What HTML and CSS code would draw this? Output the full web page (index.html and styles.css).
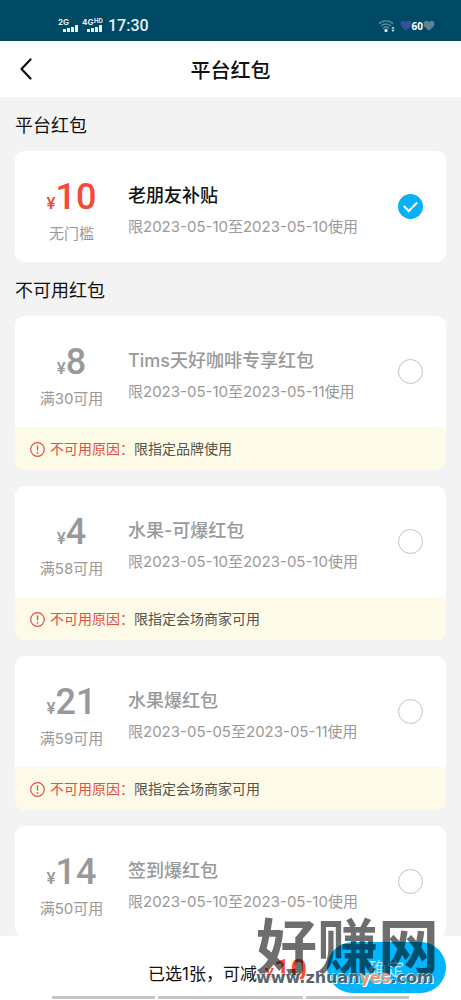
FILE: index.html
```html
<!DOCTYPE html>
<html lang="zh-CN">
<head>
<meta charset="utf-8">
<meta name="viewport" content="width=device-width, initial-scale=1">
<title>平台红包</title>
<link rel="stylesheet" href="styles.css">
</head>
<body>
<div class="screen">
  <div class="status">
    <div class="status-left">
      <svg class="signal" width="48" height="17" viewBox="0 0 48 17" aria-hidden="true">
        <g fill="#e6f1f5">
          <text class="net" x="0" y="8">2G</text>
          <text class="net" x="24" y="8">4G</text>
          <text class="hd" x="36" y="6">HD</text>
          <rect x="5" y="12" width="3" height="3"/><rect x="9" y="11" width="3" height="4"/><rect x="13" y="10" width="3" height="5"/><rect x="17" y="8" width="3" height="7"/>
          <rect x="29" y="12" width="3" height="3"/><rect x="33" y="11" width="3" height="4"/><rect x="37" y="10" width="3" height="5"/><rect x="41" y="8" width="3" height="7"/>
        </g>
      </svg>
      <time class="clock">17:30</time>
    </div>
    <div class="status-right">
      <svg width="17" height="14" viewBox="0 0 17 14" aria-hidden="true">
        <g fill="none" stroke="#52879a" stroke-width="1.6">
          <path d="M1 4.5Q8 -1 15 4.5"/><path d="M3 7Q8 3 13 7"/><path d="M5 9.3Q8 7 11 9.3"/>
        </g>
        <circle cx="8" cy="11.5" r="1.6" fill="#fff"/>
        <path d="M15 7.5l1.700 2.200h-3.400zM15 13l1.700-2.200h-3.400z" fill="#c3dde6"/>
      </svg>
      <div class="battery">
        <svg width="12" height="11" viewBox="0 0 13 12" aria-hidden="true"><path d="M6.500 11.500C4 9.500.5 7 .5 4 .5 .5 5-.5 6.500 2.500 8-.5 12.500.5 12.500 4c0 3-3.500 5.500-6 7.500z" fill="#384fa0"/></svg>
        <span>60</span>
        <svg width="12" height="11" viewBox="0 0 13 12" aria-hidden="true"><path d="M6.500 11.500C4 9.500.5 7 .5 4 .5 .5 5-.5 6.500 2.500 8-.5 12.500.5 12.500 4c0 3-3.500 5.500-6 7.500z" fill="#5d8493"/></svg>
      </div>
    </div>
  </div>

  <header class="header">
    <button class="back" type="button" aria-label="返回">
      <svg width="12" height="22" viewBox="0 0 12 22" aria-hidden="true"><path d="M10.500 1.500L1.500 11l9 9.500" fill="none" stroke="#111" stroke-width="2.200" stroke-linecap="round" stroke-linejoin="round"/></svg>
    </button>
    <h1>平台红包</h1>
  </header>

  <main class="content">
    <h2>平台红包</h2>
    <article class="card active">
      <div class="coupon">
        <div class="value"><p class="price"><small>¥</small>10</p><p class="rule">无门槛</p></div>
        <div class="info"><label class="name" for="c0">老朋友补贴</label><p class="date">限2023-05-10至2023-05-10使用</p></div>
        <input class="pick" type="radio" name="coupon" id="c0" checked>
      </div>
    </article>

    <h2>不可用红包</h2>
    <div class="list">
      <article class="card">
        <div class="coupon">
          <div class="value"><p class="price"><small>¥</small>8</p><p class="rule">满30可用</p></div>
          <div class="info"><label class="name" for="c1">Tims天好咖啡专享红包</label><p class="date">限2023-05-10至2023-05-11使用</p></div>
          <input class="pick" type="radio" name="coupon" id="c1" disabled>
        </div>
        <p class="notice">
          <svg width="15" height="15" viewBox="0 0 15 15" aria-hidden="true"><circle cx="7.500" cy="7.500" r="6.800" fill="none" stroke="#df5140" stroke-width="1.200"/><path d="M6.700 3.500h1.600l-.3 5.200h-1z" fill="#df5140"/><circle cx="7.500" cy="10.800" r=".9" fill="#df5140"/></svg>
          <span><b>不可用原因：</b>限指定品牌使用</span>
        </p>
      </article>

      <article class="card">
        <div class="coupon">
          <div class="value"><p class="price"><small>¥</small>4</p><p class="rule">满58可用</p></div>
          <div class="info"><label class="name" for="c2">水果-可爆红包</label><p class="date">限2023-05-10至2023-05-10使用</p></div>
          <input class="pick" type="radio" name="coupon" id="c2" disabled>
        </div>
        <p class="notice">
          <svg width="15" height="15" viewBox="0 0 15 15" aria-hidden="true"><circle cx="7.500" cy="7.500" r="6.800" fill="none" stroke="#df5140" stroke-width="1.200"/><path d="M6.700 3.500h1.600l-.3 5.200h-1z" fill="#df5140"/><circle cx="7.500" cy="10.800" r=".9" fill="#df5140"/></svg>
          <span><b>不可用原因：</b>限指定会场商家可用</span>
        </p>
      </article>

      <article class="card">
        <div class="coupon">
          <div class="value"><p class="price"><small>¥</small>21</p><p class="rule">满59可用</p></div>
          <div class="info"><label class="name" for="c3">水果爆红包</label><p class="date">限2023-05-05至2023-05-11使用</p></div>
          <input class="pick" type="radio" name="coupon" id="c3" disabled>
        </div>
        <p class="notice">
          <svg width="15" height="15" viewBox="0 0 15 15" aria-hidden="true"><circle cx="7.500" cy="7.500" r="6.800" fill="none" stroke="#df5140" stroke-width="1.200"/><path d="M6.700 3.500h1.600l-.3 5.200h-1z" fill="#df5140"/><circle cx="7.500" cy="10.800" r=".9" fill="#df5140"/></svg>
          <span><b>不可用原因：</b>限指定会场商家可用</span>
        </p>
      </article>

      <article class="card">
        <div class="coupon">
          <div class="value"><p class="price"><small>¥</small>14</p><p class="rule">满50可用</p></div>
          <div class="info"><label class="name" for="c4">签到爆红包</label><p class="date">限2023-05-10至2023-05-10使用</p></div>
          <input class="pick" type="radio" name="coupon" id="c4" disabled>
        </div>
      </article>
    </div>
  </main>

  <footer class="footer">
    <div class="checkout">
      <p class="summary">已选1张，可减<span class="saving"><small>¥</small>10</span></p>
      <button class="confirm" type="button">确定</button>
    </div>
    <div class="gestures"><i></i><i></i><i></i></div>
    <div class="watermark" aria-hidden="true">
      <div class="mark-name">好赚网</div>
      <div class="mark-url">www.zhuan<em>yes</em>.com</div>
    </div>
  </footer>
</div>
</body>
</html>
```

FILE: styles.css
```css
* { box-sizing: border-box; }
body, h1, h2, p { margin: 0; }
body {
  font-family: Inter, "Noto Sans CJK SC", sans-serif;
  color: #111;
  background: #f3f3f3;
}
button { padding: 0; border: 0; font: inherit; }
.screen { display: flex; flex-direction: column; height: 100vh; overflow: hidden; }

.status {
  flex: none;
  display: flex;
  justify-content: space-between;
  height: 41px;
  padding: 10px 26px 0 58px;
  color: #e6f1f5;
  background: #004964;
}
.status-left, .status-right, .battery { display: flex; align-items: center; }
.status-left { gap: 2px; }
.status-right { gap: 5px; }
.net { font: bold 8px Inter, sans-serif; }
.hd { font: bold 6px Inter, sans-serif; }
.clock { font: 500 16px/24px Roboto, sans-serif; }
.battery { font: bold 10px/12px "Noto Sans", sans-serif; color: #fff; }

.header {
  flex: none;
  display: grid;
  grid-template-columns: 48px 1fr 48px;
  align-items: center;
  height: 56px;
  background: #fff;
}
.back { display: flex; align-items: center; height: 56px; padding-left: 20px; background: none; }
h1 { padding-top: 3px; font-size: 20px; font-weight: 500; line-height: 28px; text-align: center; }

.content { flex: 1; min-height: 0; padding: 0 15px; overflow-y: auto; scrollbar-width: none; }
h2 { padding: 15px 0 12px; font-size: 18px; font-weight: 400; line-height: 27px; }
.list { display: grid; gap: 16px; }
.card { overflow: hidden; color: #999; background: #fff; border-radius: 9px; }
.coupon { display: flex; align-items: center; min-height: 111px; padding-right: 23px; }
.value { flex: none; width: 113px; padding-top: 8px; text-align: center; }
.price { font: 500 36px/40px Roboto, "Noto Sans CJK SC", sans-serif; }
.price small { font-size: 17px; }
.rule { font-size: 15px; line-height: 22px; }
.info { flex: 1; min-width: 0; padding-top: 8px; }
.name { display: block; font-size: 18px; font-weight: 500; line-height: 28px; }
.date { margin-top: 5px; font-size: 15px; line-height: 24px; white-space: nowrap; }
.active .price { color: #f64a35; }
.active .name { color: #111; }

.pick {
  flex: none;
  appearance: none;
  display: grid;
  place-items: center;
  width: 25px;
  height: 25px;
  margin: 0;
  border: 1px solid #c2c2c2;
  border-radius: 50%;
}
.pick:checked { border: 0; background: #08b0f8; }
.pick:checked::after {
  content: "";
  width: 11px;
  height: 6px;
  margin-bottom: 3px;
  border: solid #fff;
  border-width: 0 0 2px 2px;
  transform: rotate(-45deg);
}

.notice {
  display: flex;
  align-items: center;
  gap: 5px;
  min-height: 43px;
  padding: 1px 15px 0;
  font-size: 14px;
  line-height: 20px;
  color: #55534a;
  background: #fefae8;
}
.notice b { font-weight: 400; color: #df5140; }

.footer { flex: none; position: relative; padding-top: 6px; background: #fff; }
.checkout { display: flex; align-items: center; justify-content: flex-end; gap: 20px; padding: 0 15px; }
.summary { padding-top: 8px; font-size: 17px; line-height: 24px; }
.saving { margin-left: 8px; font: 500 29px/24px Roboto, sans-serif; color: #f64a35; }
.saving small { font-size: 17px; }
.confirm {
  width: 119px;
  height: 51px;
  font-size: 18px;
  color: rgba(255, 255, 255, 0.7);
  background: #02b5fc;
  border-radius: 26px;
}
.gestures {
  display: grid;
  grid-template-columns: 103fr 144fr 103fr;
  gap: 3px;
  padding: 3px 52px 1px;
}
.gestures i { height: 3px; background: #c6c6c6; }

.watermark {
  position: absolute;
  right: 22px;
  bottom: 13px;
  color: rgba(0, 0, 0, 0.57);
  pointer-events: none;
  white-space: nowrap;
}
.mark-name {
  font: 700 61px/50px "Noto Sans CJK SC", sans-serif;
}
.mark-url {
  font: bold 16px/18px "DejaVu Sans", sans-serif;
  color: rgba(40, 60, 70, 0.8);
  text-shadow: 1px 1px #fff, -1px -1px rgba(255, 255, 255, 0.6);
}
.mark-url em { font-style: normal; color: #e39a78; }
```
